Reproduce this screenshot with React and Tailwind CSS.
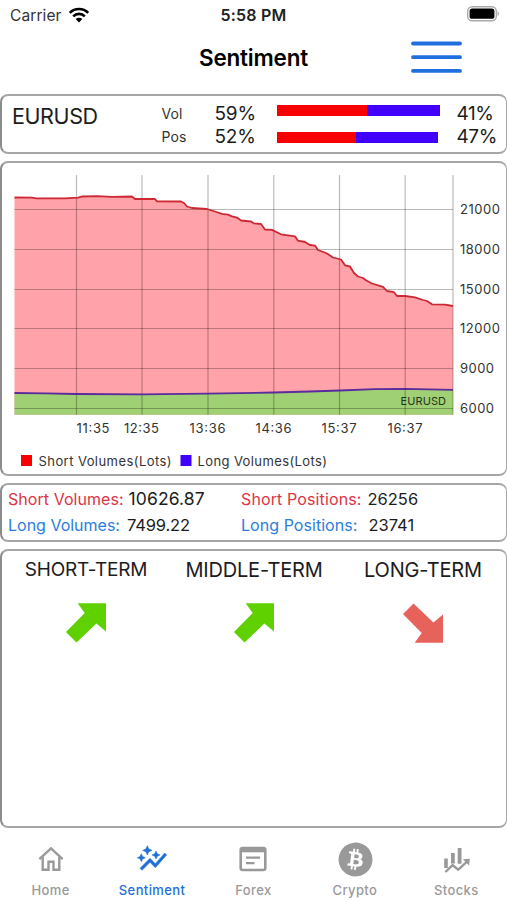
import React, { useState } from 'react';
import { FaBitcoin } from 'react-icons/fa';

const SHORT_POINTS = [
  [14.5, 197.5], [32, 197.7], [36, 198.3], [65, 198.3], [78, 197.7], [82, 196.5], [97, 196.1], [112, 196.8],
  [132, 196.5], [135, 199], [155, 199], [157, 201.3], [181, 201.5], [184, 203], [187, 206.5], [192, 208],
  [207, 209], [215, 211.5], [222, 213.8], [228, 214.7], [232, 216.3], [237, 217.6], [241, 220.5], [251, 221.5],
  [254, 223.4], [261, 224], [265, 229.5], [272, 229.9], [281, 234.3], [295, 236.3], [298, 240.7], [305, 242],
  [310, 245], [315, 245.6], [318, 250], [327, 253.5], [333, 257.5], [341, 259.5], [345, 265.3], [350, 266.5],
  [354, 273], [358, 276.5], [363, 278], [366, 280.3], [372, 283.5], [383, 286.8], [387, 291], [394, 292.2],
  [397, 296], [405, 296], [415, 297.3], [423, 300], [427, 301], [432, 304.3], [445, 304.7], [453, 306],
];

const LONG_POINTS = [
  [14.5, 393], [45, 393.4], [76, 394], [142, 394.3], [207, 393.7], [274, 392.5], [310, 391.5], [340, 390.5],
  [375, 389.1], [405, 388.8], [453, 389.8],
];

const Y_TICKS = [
  { y: 209.5, label: '21000', width: 40 },
  { y: 249.5, label: '18000', width: 40 },
  { y: 289.5, label: '15000', width: 40 },
  { y: 328.5, label: '12000', width: 40 },
  { y: 368.5, label: '9000', width: 34 },
  { y: 408.5, label: '6000', width: 34 },
];

const X_TICKS = [
  { x: 76.5, labelX: 76.5, label: '11:35', width: 33 },
  { x: 142, labelX: 124, label: '12:35', width: 35 },
  { x: 208, labelX: 189.5, label: '13:36', width: 36 },
  { x: 273.8, labelX: 255.5, label: '14:36', width: 36 },
  { x: 339.5, labelX: 321.5, label: '15:37', width: 35 },
  { x: 405.2, labelX: 387.5, label: '16:37', width: 35 },
];

const toLine = (points) => points.map((p) => p.join(',')).join(' ');

function Card({ className, children }) {
  return (
    <section className={`shrink-0 rounded-lg border-2 border-r border-[#a6a6a6] border-l-[#8c8c8c] bg-white ${className}`}>
      {children}
    </section>
  );
}

function StatusBar() {
  return (
    <div className="flex h-[30px] items-center justify-between pt-px pr-[7px] pl-[10px]">
      <div className="flex w-[160px] items-center gap-[6px]">
        <span className="text-[15.5px] tracking-[0.1px] text-[#333]">Carrier</span>
        <svg width="22" height="16" viewBox="0 0 22 16" fill="none" stroke="#000" strokeWidth="2.6" className="-mt-px">
          <path d="M1.8 5.8a13 13 0 0 1 18.4 0" />
          <path d="M5.2 9.3a8.2 8.2 0 0 1 11.6 0" />
          <path d="M11 15.4l-3.3-3.3a4.7 4.7 0 0 1 6.6 0z" fill="#000" stroke="none" />
        </svg>
      </div>
      <span className="-ml-[3px] text-[16px] font-semibold tracking-[0.2px] text-[#222]">5:58 PM</span>
      <div className="flex w-[160px] items-center justify-end">
        <svg width="34" height="18" viewBox="0 0 34 18" className="-mt-[3px]">
          <rect x="1.7" y="1.7" width="28.6" height="14" rx="4.5" fill="#fff" stroke="#aaa" strokeWidth="1.4" />
          <rect x="3.6" y="3.6" width="24.8" height="10.2" rx="2.6" fill="#000" />
          <path d="M31.6 6.3c1.8.7 1.8 4.1 0 4.8z" fill="#aaa" />
        </svg>
      </div>
    </div>
  );
}

function Header() {
  return (
    <header className="grid h-16 grid-cols-3 items-center">
      <h1 className="col-start-2 -mt-2 text-center text-[22.5px] font-semibold tracking-[-0.2px] text-black">
        Sentiment
      </h1>
      <button aria-label="Menu" className="mr-[45px] -mt-[10px] justify-self-end">
        <svg width="51" height="32" viewBox="0 0 51 32" stroke="#1f6fe0" strokeWidth="3.8" strokeLinecap="round">
          <path d="M2 2.5h47M2 16.2h47M2 29.9h47" />
        </svg>
      </button>
    </header>
  );
}

function RatioBar({ short, long }) {
  return (
    <div className="flex h-[11px]">
      <div className="bg-[#f90000]" style={{ width: short }} />
      <div className="bg-[#4100fa]" style={{ width: long }} />
    </div>
  );
}

function VolumeChart() {
  const left = 14.5;
  const right = 453;
  const bottom = 414.8;

  return (
    <svg width="503" height="311" viewBox="2 163 503 311" className="block" fontFamily="Inter, sans-serif">
      <polygon points={`${left},${bottom} ${toLine(SHORT_POINTS)} ${right},${bottom}`} fill="#ffa2a9" />
      <polygon points={`${left},${bottom} ${toLine(LONG_POINTS)} ${right},${bottom}`} fill="#a0d074" />
      <g stroke="#000" strokeOpacity="0.27" strokeWidth="1.2">
        {Y_TICKS.map((tick) => (
          <line key={tick.label} x1={left} x2={right} y1={tick.y} y2={tick.y} />
        ))}
        {X_TICKS.map((tick) => (
          <line key={tick.label} x1={tick.x} x2={tick.x} y1="175" y2={bottom} />
        ))}
        <line x1={right} x2={right} y1="175" y2={bottom} />
      </g>
      <polyline points={toLine(SHORT_POINTS)} fill="none" stroke="#cc2935" strokeWidth="1.8" strokeLinejoin="round" />
      <polyline points={toLine(LONG_POINTS)} fill="none" stroke="#5a2b9c" strokeWidth="1.8" />

      <g fontSize="13" fill="#333">
        {Y_TICKS.map((tick) => (
          <text key={tick.label} x="460" y={tick.y + 4} textLength={tick.width}>{tick.label}</text>
        ))}
        {X_TICKS.map((tick) => (
          <text key={tick.label} x={tick.labelX} y="433.3" textLength={tick.width}>{tick.label}</text>
        ))}
        <text x="400.5" y="405.3" fontSize="11" textLength="45.5" fill="#26331c">EURUSD</text>
        <rect x="21" y="455" width="11" height="11" fill="#f90000" />
        <text x="38.5" y="465.7" textLength="133">Short Volumes(Lots)</text>
        <rect x="180.5" y="455" width="11" height="11" fill="#4100fa" />
        <text x="197.5" y="465.7" textLength="129.5">Long Volumes(Lots)</text>
      </g>
    </svg>
  );
}

function TrendArrow({ down }) {
  return (
    <svg
      width="40"
      height="40"
      viewBox="0 0 40 40"
      fill={down ? '#e8625c' : '#5fd100'}
      className={down ? '-scale-y-100' : ''}
    >
      <path d="M11.7.2H40v28.3l-9.6-8L10.5 39.5 0 29 18.7 10z" />
    </svg>
  );
}

function HomeIcon() {
  return (
    <svg width="26" height="26" viewBox="0 0 26 26" fill="none" stroke="currentColor" strokeWidth="2.4">
      <path d="M1.4 13.2L13 2.4l11.6 10.8" />
      <path d="M4.7 11v12.8h5.8v-8h5v8h5.8V11" />
    </svg>
  );
}

function SentimentIcon() {
  return (
    <svg width="32" height="32" viewBox="0 0 24 24" fill="currentColor" stroke="currentColor" strokeWidth="0.4">
      <path d="M8.5 9l1.09-2.41L12 5.5 9.59 4.41 8.5 2 7.41 4.41 5 5.5l2.41 1.09z" />
      <path d="M15 12l.94-2.06L18 9l-2.06-.94L15 6l-.94 2.06L12 9l2.06.94z" />
      <path d="M4 14l.94-2.06L7 11l-2.06-.94L4 8l-.94 2.06L1 11l2.06.94z" />
      <path d="M4.5 20.5l6-6.01 4 4L23 8.93l-1.41-1.41-7.09 7.97-4-4L3 19z" />
    </svg>
  );
}

function ForexIcon() {
  return (
    <svg width="28" height="26" viewBox="0 0 28 26" fill="none" stroke="currentColor">
      <rect x="1.7" y="2" width="24.6" height="22" rx="2" strokeWidth="2.6" />
      <path d="M2 4h24" strokeWidth="4.6" />
      <path d="M7 11.7h14M7 17.2h8.5" strokeWidth="2.2" />
    </svg>
  );
}

function StocksIcon() {
  return (
    <svg width="28" height="28" viewBox="0 0 28 28" fill="currentColor" className="mt-px">
      <rect x="2.2" y="12.5" width="3.6" height="9.5" />
      <rect x="9" y="7" width="3.8" height="10.5" />
      <rect x="15.7" y="2" width="3.8" height="15.8" />
      <path d="M3.4 26l7.2-6.8 5.7 4.4 8.7-8" fill="none" stroke="currentColor" strokeWidth="2.4" />
      <path d="M20.8 13.2l7-.5-.7 6.7z" />
    </svg>
  );
}

const TABS = [
  { id: 'home', label: 'Home', icon: <HomeIcon /> },
  { id: 'sentiment', label: 'Sentiment', icon: <SentimentIcon /> },
  { id: 'forex', label: 'Forex', icon: <ForexIcon /> },
  { id: 'crypto', label: 'Crypto', icon: <FaBitcoin size={35} className="mt-px ml-px -rotate-6" /> },
  { id: 'stocks', label: 'Stocks', icon: <StocksIcon /> },
];

export default function App() {
  const [activeTab, setActiveTab] = useState('sentiment');

  return (
    <div className="flex h-[900px] w-[507px] flex-col overflow-hidden bg-white font-['Inter',sans-serif] text-[#1c1c1c]">
      <StatusBar />
      <Header />

      <main className="flex flex-col gap-[7px]">
        <Card className="flex h-[60px] pl-[10px]">
          <h2 className="mt-[4px] w-[149.5px] text-[21.5px] tracking-[-0.4px]">EURUSD</h2>
          <div className="mt-[6px] w-[53px] text-[14px] leading-[23px] tracking-[0.1px] text-[#333]">
            <p>Vol</p>
            <p>Pos</p>
          </div>
          <div className="mt-[6px] w-[62px] text-[19px] leading-[23px] tracking-[-0.2px]">
            <p>59%</p>
            <p>52%</p>
          </div>
          <div className="mt-[9px] flex w-[180px] flex-col gap-[16px]">
            <RatioBar short={90} long={73} />
            <RatioBar short={79} long={82} />
          </div>
          <div className="mt-[6px] text-[19px] leading-[23px] tracking-[-0.4px]">
            <p>41%</p>
            <p>47%</p>
          </div>
        </Card>

        <Card className="h-[315px]">
          <VolumeChart />
        </Card>

        <Card className="flex h-[59px] pt-px pl-[6px] text-[16.5px] leading-[26px]">
          <div className="w-[233px]">
            <p className="flex gap-[5px]">
              <span className="text-[16px] tracking-[0.05px] text-[#dc3545]">Short Volumes:</span>
              <span className="text-[17.5px] tracking-[0.1px]">10626.87</span>
            </p>
            <p className="flex gap-[7px]">
              <span className="text-[16px] text-[#2b7de0]">Long Volumes:</span>
              <span className="tracking-[-0.15px]">7499.22</span>
            </p>
          </div>
          <div>
            <p className="flex gap-[6px]">
              <span className="text-[16px] tracking-[0.12px] text-[#dc3545]">Short Positions:</span>
              <span>26256</span>
            </p>
            <p className="flex gap-[11px]">
              <span className="text-[16px] tracking-[0.05px] text-[#2b7de0]">Long Positions:</span>
              <span>23741</span>
            </p>
          </div>
        </Card>

        <Card className="grid h-[279px] grid-cols-3 pt-[4px] text-[20px] tracking-[-0.2px]">
          <div className="flex flex-col items-center gap-[18px]">
            <h3 className="text-[19px] leading-[30px]">SHORT-TERM</h3>
            <TrendArrow />
          </div>
          <div className="flex flex-col items-center gap-[18px]">
            <h3 className="leading-[30px]">MIDDLE-TERM</h3>
            <TrendArrow />
          </div>
          <div className="flex flex-col items-center gap-[18px] pl-[2px]">
            <h3 className="leading-[30px]">LONG-TERM</h3>
            <TrendArrow down />
          </div>
        </Card>
      </main>

      <nav className="mt-[10px] grid grid-cols-5">
        {TABS.map((tab) => (
          <button
            key={tab.id}
            onClick={() => setActiveTab(tab.id)}
            className={`flex flex-col items-center text-[13px] font-medium tracking-[0.4px] ${
              activeTab === tab.id ? 'text-[#1f6fd6]' : 'text-[#999]'
            }`}
          >
            <span className="flex h-[43px] items-center">{tab.icon}</span>
            <span>{tab.label}</span>
          </button>
        ))}
      </nav>
    </div>
  );
}
